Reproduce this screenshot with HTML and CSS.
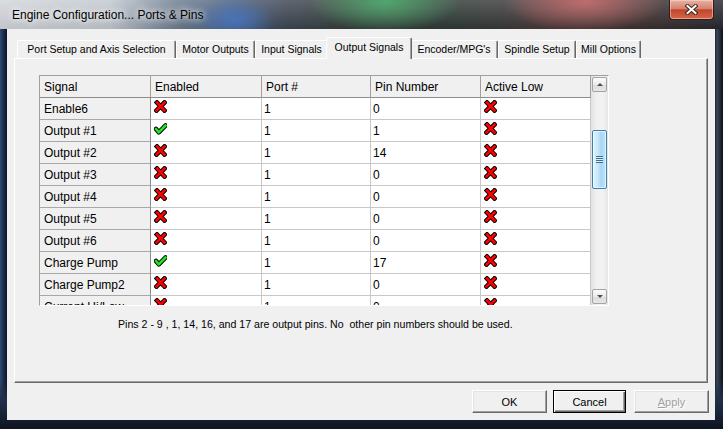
FILE: index.html
```html
<!DOCTYPE html>
<html>
<head>
  <title>Engine Configuration... Ports &amp; Pins</title>
  <link rel="stylesheet" href="styles.css">
</head>
<body>
  <svg width="0" height="0" class="defs">
    <symbol id="ico-x" viewBox="0 0 13 13">
      <path d="M3 2.5L10.5 10.5M10.5 2.5L2.5 10.5" stroke="#000" stroke-width="4.6" stroke-linecap="square" fill="none"/>
      <path d="M3 2.5L10.5 10.5M10.5 2.5L2.5 10.5" stroke="#f00" stroke-width="2.6" stroke-linecap="square" fill="none"/>
    </symbol>
    <symbol id="ico-ok" viewBox="0 0 13 13">
      <path d="M2 7L4.8 10.3L11.5 3.5" stroke="#000" stroke-width="4.6" stroke-linejoin="round" stroke-linecap="round" fill="none"/>
      <path d="M2 7L4.8 10.3L11.5 3.5" stroke="#22e622" stroke-width="2.6" stroke-linejoin="round" stroke-linecap="round" fill="none"/>
    </symbol>
  </svg>

  <div class="window">
    <div class="titlebar">
      <span class="title">Engine Configuration... Ports &amp; Pins</span>
      <div class="close-btn">
        <svg width="13" height="11" viewBox="0 0 13 11">
          <path d="M2.5 2L10.5 9M10.5 2L2.5 9" stroke="#3a2a28" stroke-width="4" stroke-linecap="square"/>
          <path d="M2.5 2L10.5 9M10.5 2L2.5 9" stroke="#fff" stroke-width="2" stroke-linecap="square"/>
        </svg>
      </div>
    </div>

    <div class="client">
      <div class="tabs">
        <div class="tab t-port">Port Setup and Axis Selection</div>
        <div class="tab t-motor">Motor Outputs</div>
        <div class="tab t-input">Input Signals</div>
        <div class="tab t-output active">Output Signals</div>
        <div class="tab t-enc">Encoder/MPG's</div>
        <div class="tab t-spindle">Spindle Setup</div>
        <div class="tab t-mill">Mill Options</div>
      </div>

      <div class="panel">
        <div class="grid">
          <div class="table">
            <div class="row head">
              <div class="cell c1">Signal</div>
              <div class="cell c2">Enabled</div>
              <div class="cell c3">Port #</div>
              <div class="cell c4">Pin Number</div>
              <div class="cell c5">Active Low</div>
            </div>
            <div class="row">
              <div class="cell c1">Enable6</div>
              <div class="cell c2 ic"><svg class="ico"><use href="#ico-x"/></svg></div>
              <div class="cell c3">1</div>
              <div class="cell c4">0</div>
              <div class="cell c5 ic"><svg class="ico"><use href="#ico-x"/></svg></div>
            </div>
            <div class="row">
              <div class="cell c1">Output #1</div>
              <div class="cell c2 ic"><svg class="ico"><use href="#ico-ok"/></svg></div>
              <div class="cell c3">1</div>
              <div class="cell c4">1</div>
              <div class="cell c5 ic"><svg class="ico"><use href="#ico-x"/></svg></div>
            </div>
            <div class="row">
              <div class="cell c1">Output #2</div>
              <div class="cell c2 ic"><svg class="ico"><use href="#ico-x"/></svg></div>
              <div class="cell c3">1</div>
              <div class="cell c4">14</div>
              <div class="cell c5 ic"><svg class="ico"><use href="#ico-x"/></svg></div>
            </div>
            <div class="row">
              <div class="cell c1">Output #3</div>
              <div class="cell c2 ic"><svg class="ico"><use href="#ico-x"/></svg></div>
              <div class="cell c3">1</div>
              <div class="cell c4">0</div>
              <div class="cell c5 ic"><svg class="ico"><use href="#ico-x"/></svg></div>
            </div>
            <div class="row">
              <div class="cell c1">Output #4</div>
              <div class="cell c2 ic"><svg class="ico"><use href="#ico-x"/></svg></div>
              <div class="cell c3">1</div>
              <div class="cell c4">0</div>
              <div class="cell c5 ic"><svg class="ico"><use href="#ico-x"/></svg></div>
            </div>
            <div class="row">
              <div class="cell c1">Output #5</div>
              <div class="cell c2 ic"><svg class="ico"><use href="#ico-x"/></svg></div>
              <div class="cell c3">1</div>
              <div class="cell c4">0</div>
              <div class="cell c5 ic"><svg class="ico"><use href="#ico-x"/></svg></div>
            </div>
            <div class="row">
              <div class="cell c1">Output #6</div>
              <div class="cell c2 ic"><svg class="ico"><use href="#ico-x"/></svg></div>
              <div class="cell c3">1</div>
              <div class="cell c4">0</div>
              <div class="cell c5 ic"><svg class="ico"><use href="#ico-x"/></svg></div>
            </div>
            <div class="row">
              <div class="cell c1">Charge Pump</div>
              <div class="cell c2 ic"><svg class="ico"><use href="#ico-ok"/></svg></div>
              <div class="cell c3">1</div>
              <div class="cell c4">17</div>
              <div class="cell c5 ic"><svg class="ico"><use href="#ico-x"/></svg></div>
            </div>
            <div class="row">
              <div class="cell c1">Charge Pump2</div>
              <div class="cell c2 ic"><svg class="ico"><use href="#ico-x"/></svg></div>
              <div class="cell c3">1</div>
              <div class="cell c4">0</div>
              <div class="cell c5 ic"><svg class="ico"><use href="#ico-x"/></svg></div>
            </div>
            <div class="row">
              <div class="cell c1">Current Hi/Low</div>
              <div class="cell c2 ic"><svg class="ico"><use href="#ico-x"/></svg></div>
              <div class="cell c3">1</div>
              <div class="cell c4">0</div>
              <div class="cell c5 ic"><svg class="ico"><use href="#ico-x"/></svg></div>
            </div>
          </div>

          <div class="scrollbar">
            <div class="sb-btn"><span class="arrow up"></span></div>
            <div class="sb-thumb"><span class="grip"></span></div>
            <div class="sb-space"></div>
            <div class="sb-btn"><span class="arrow down"></span></div>
          </div>
        </div>

        <p class="note">Pins 2 - 9 , 1, 14, 16, and 17 are output pins. No&nbsp; other pin numbers should be used.</p>
      </div>

      <div class="buttons">
        <div class="btn btn-ok">OK</div>
        <div class="btn btn-cancel">Cancel</div>
        <div class="btn btn-apply"><u>A</u>pply</div>
      </div>
    </div>
  </div>
</body>
</html>
```

FILE: styles.css
```css
body {
  margin: 0;
  font-family: "Liberation Sans", Arial, sans-serif;
  font-size: 11px;
  color: #000;
}

.defs {
  position: absolute;
}

.window {
  width: 723px;
  height: 429px;
  display: flex;
  flex-direction: column;
  overflow: hidden;
  background:
    linear-gradient(to bottom, transparent 380px, #20304a 400px, #0e1420 429px),
    linear-gradient(to right, #2c4a78 0, #10192a 6px, #141c2c 30px, #2a3040 300px, #1c222c 715px, #3a4658 717px, #0c1018 723px);
}

/* glass title bar */
.titlebar {
  height: 29px;
  display: flex;
  justify-content: space-between;
  align-items: flex-start;
  background:
    radial-gradient(ellipse 75px 30px at 385px 2px, rgba(80, 170, 110, 0.95), transparent),
    radial-gradient(ellipse 80px 30px at 585px 2px, rgba(200, 110, 110, 0.9), transparent),
    radial-gradient(ellipse 40px 22px at 235px 20px, rgba(70, 120, 200, 0.8), transparent),
    linear-gradient(to bottom, rgba(255, 255, 255, 0.18), rgba(0, 0, 0, 0.08)),
    linear-gradient(to right, #d2d6db 0, #c2c8cf 110px, #6e7e92 175px, #4a5e7c 230px, #3c4450 290px, #34403c 340px, #2e3a36 450px, #383838 500px, #4a3838 540px, #3c3030 650px, #262830 723px);
}

.title {
  margin: 7px 0 0 12px;
  font-size: 12px;
  line-height: 16px;
  text-shadow: 0 0 6px #fff, 0 0 10px rgba(255, 255, 255, 0.8);
}

.close-btn {
  width: 43px;
  height: 19px;
  margin-right: 9px;
  border: 1px solid #3a1a14;
  border-top: none;
  border-radius: 0 0 4px 4px;
  display: flex;
  align-items: center;
  justify-content: center;
  background: linear-gradient(to bottom, #e7b3a6, #d6826c 45%, #c2462c 52%, #d4674a);
  box-shadow: inset 0 0 0 1px rgba(255, 220, 210, 0.5);
}

.client {
  flex: 1;
  margin: 0 8px 9px 7px;
  background: #f0f0f0;
  display: flex;
  flex-direction: column;
}

/* tabs */
.tabs {
  display: flex;
  align-items: flex-end;
  height: 21px;
  margin: 8px 0 0 10px;
  position: relative;
  z-index: 1;
}

.tab {
  height: 18px;
  line-height: 17px;
  box-sizing: border-box;
  border: 1px solid;
  border-color: #fff #696969 transparent #fff;
  border-bottom: none;
  border-radius: 2px 2px 0 0;
  box-shadow: inset -1px 0 0 #a0a0a0;
  text-align: center;
  font-size: 10.5px;
  background: #f0f0f0;
}

.tab.active {
  height: 22px;
  line-height: 19px;
  margin: 0 -2px -1px;
  position: relative;
  z-index: 2;
}

.t-port { width: 159px; }
.t-motor { width: 79px; }
.t-input { width: 73px; }
.t-output { width: 86px; }
.t-enc { width: 88px; }
.t-spindle { width: 78px; }
.t-mill { width: 65px; }

.panel {
  height: 325px;
  margin: 0 7px;
  box-sizing: border-box;
  border: 1px solid;
  border-color: #fff #696969 #696969 #fff;
  box-shadow: inset -1px -1px 0 #a0a0a0;
  padding: 16px 0 0 24px;
}

/* signal grid */
.grid {
  width: 570px;
  height: 231px;
  box-sizing: border-box;
  border: 1px solid;
  border-color: #a0a0a0 #fff #fff #a0a0a0;
  display: flex;
  font-size: 12px;
}

.table {
  width: 551px;
  height: 229px;
  overflow: hidden;
  background: #fff;
}

.row {
  display: flex;
  height: 22px;
}

.cell {
  box-sizing: border-box;
  height: 22px;
  border-right: 1px solid #c8c8c8;
  border-bottom: 1px solid #c8c8c8;
  padding-left: 2px;
  display: flex;
  align-items: center;
  white-space: nowrap;
  overflow: hidden;
}

.c1 { width: 111px; padding-left: 4px; background: #f0f0f0; border-right-color: #8c8c8c; border-bottom-color: #a8a8a8; }
.c2 { width: 111px; }
.c3 { width: 109px; }
.c4 { width: 110px; }
.c5 { width: 110px; }

.head .cell {
  background: #f0f0f0;
  padding-left: 4px;
  border-right-color: #a0a0a0;
  border-bottom-color: #8c8c8c;
}

.cell.ic {
  align-items: flex-start;
  padding: 2px 0 0 3px;
}

.ico {
  width: 13px;
  height: 13px;
}

/* scrollbar */
.scrollbar {
  width: 17px;
  box-sizing: border-box;
  padding: 1px 0;
  display: flex;
  flex-direction: column;
  align-items: center;
  background: linear-gradient(to right, #e2e2e2, #efefef 30%, #f2f2f2 70%, #e6e6e6);
}

.sb-btn {
  width: 15px;
  height: 15px;
  box-sizing: border-box;
  border: 1px solid #a3a3a3;
  border-radius: 2px;
  background: linear-gradient(to bottom, #fcfcfc, #ececec 50%, #dcdcdc 51%, #e6e6e6);
  display: flex;
  align-items: center;
  justify-content: center;
}

.arrow {
  width: 0;
  height: 0;
  border-left: 3px solid transparent;
  border-right: 3px solid transparent;
}

.arrow.up { border-bottom: 3px solid #4d4d4d; }
.arrow.down { border-top: 3px solid #4d4d4d; }

.sb-thumb {
  width: 15px;
  height: 59px;
  margin-top: 38px;
  box-sizing: border-box;
  border: 1px solid #3c7fb1;
  border-radius: 2px;
  background: linear-gradient(to right, #e4f3fc, #c5e6f8 40%, #a9d8f4 60%, #bfe2f7);
  box-shadow: inset 0 0 0 1px rgba(255, 255, 255, 0.6);
  display: flex;
  align-items: center;
  justify-content: center;
}

.grip {
  width: 7px;
  height: 7px;
  background: repeating-linear-gradient(to bottom, #3e6e94 0, #3e6e94 1px, #d8eefb 1px, #d8eefb 2px);
}

.sb-space {
  flex: 1;
}

.note {
  margin: 12px 0 0 79px;
  line-height: 13px;
  font-size: 10.6px;
}

/* dialog buttons */
.buttons {
  display: flex;
  justify-content: flex-end;
  margin: 7px 6px 0 0;
}

.btn {
  width: 75px;
  height: 23px;
  box-sizing: border-box;
  border: 1px solid;
  border-color: #fff #696969 #696969 #fff;
  box-shadow: inset -1px -1px 0 #a0a0a0, inset 1px 1px 0 #e3e3e3;
  display: flex;
  align-items: center;
  justify-content: center;
  background: #f0f0f0;
}

.btn-ok { margin-right: 6px; }

.btn-cancel {
  width: 73px;
  margin-right: 8px;
  border: 1px solid #000;
  box-shadow: inset 1px 1px 0 #fff, inset -1px -1px 0 #696969, inset -2px -2px 0 #a0a0a0;
}

.btn-apply {
  color: #a0a0a0;
  text-shadow: 1px 1px 0 #fff;
}
```
